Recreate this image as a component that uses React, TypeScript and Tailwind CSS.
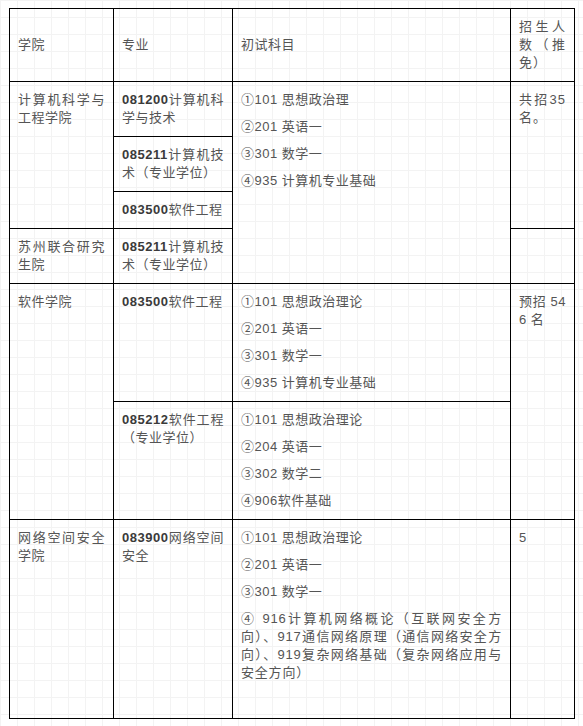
const LIST_A = ['①101 思想政治理', '②201 英语一', '③301 数学一', '④935 计算机专业基础'];
const LIST_B = ['①101 思想政治理论', '②201 英语一', '③301 数学一', '④935 计算机专业基础'];
const LIST_C = ['①101 思想政治理论', '②204 英语一', '③302 数学二', '④906软件基础'];
const LIST_D = ['①101 思想政治理论', '②201 英语一', '③301 数学一'];

function Subjects({ items, extra }: { items: string[]; extra?: string }) {
  return (
    <div className="flex flex-col gap-[9px]">
      {items.map((s) => (
        <p key={s}>{s}</p>
      ))}
      {extra && <p className="tracking-[0.8px]">{extra}</p>}
    </div>
  );
}

function Major({ code, name }: { code: string; name: string }) {
  return (
    <p>
      <span className="font-bold text-[#3a3a3a]">{code}</span>
      {name}
    </p>
  );
}

const td = 'border border-black px-[8px] py-[9px] align-top';
const th = 'border border-black px-[8px] py-[9px] align-middle font-normal';

export default function App() {
  return (
    <main
      className="min-h-[726px] w-[583px] pl-[9px] pt-[8px] bg-white bg-[linear-gradient(#f3f3f3_1px,transparent_1px),linear-gradient(90deg,#f3f3f3_1px,transparent_1px)] bg-[size:17px_17px]"
      style={{ fontFamily: '"Liberation Sans", "Noto Sans CJK SC", sans-serif' }}
    >
      <table className="table-fixed border-collapse text-[13px] leading-[18px] tracking-[0.5px] text-[#555] text-justify">
        <colgroup>
          <col className="w-[104px]" />
          <col className="w-[119px]" />
          <col className="w-[278px]" />
          <col className="w-[64px]" />
        </colgroup>
        <thead>
          <tr>
            <th className={`${th} text-left`}>学院</th>
            <th className={`${th} text-left`}>专业</th>
            <th className={`${th} text-left`}>初试科目</th>
            <th className={`${th} text-justify tracking-[1px]`}>招生人数（推免）</th>
          </tr>
        </thead>
        <tbody>
          <tr>
            <td className={td} rowSpan={3}>
              计算机科学与工程学院
            </td>
            <td className={td}>
              <Major code="081200" name="计算机科学与技术" />
            </td>
            <td className={td} rowSpan={4}>
              <Subjects items={LIST_A} />
            </td>
            <td className={`${td} break-all tracking-[1px]`} rowSpan={3}>
              共招35名。
            </td>
          </tr>
          <tr>
            <td className={td}>
              <Major code="085211" name="计算机技术（专业学位）" />
            </td>
          </tr>
          <tr>
            <td className={td}>
              <Major code="083500" name="软件工程" />
            </td>
          </tr>
          <tr>
            <td className={td}>苏州联合研究生院</td>
            <td className={td}>
              <Major code="085211" name="计算机技术（专业学位）" />
            </td>
            <td className={td}></td>
          </tr>
          <tr>
            <td className={td} rowSpan={2}>
              软件学院
            </td>
            <td className={td}>
              <Major code="083500" name="软件工程" />
            </td>
            <td className={td}>
              <Subjects items={LIST_B} />
            </td>
            <td className={`${td} break-all`} rowSpan={2}>
              预招 546 名
            </td>
          </tr>
          <tr>
            <td className={td}>
              <Major code="085212" name="软件工程（专业学位）" />
            </td>
            <td className={td}>
              <Subjects items={LIST_C} />
            </td>
          </tr>
          <tr>
            <td className={td}>网络空间安全学院</td>
            <td className={td}>
              <Major code="083900" name="网络空间安全" />
            </td>
            <td className={`${td} pb-[36px]`}>
              <Subjects
                items={LIST_D}
                extra="④ 916计算机网络概论（互联网安全方向）、917通信网络原理（通信网络安全方向）、919复杂网络基础（复杂网络应用与安全方向）"
              />
            </td>
            <td className={td}>5</td>
          </tr>
        </tbody>
      </table>
    </main>
  );
}
